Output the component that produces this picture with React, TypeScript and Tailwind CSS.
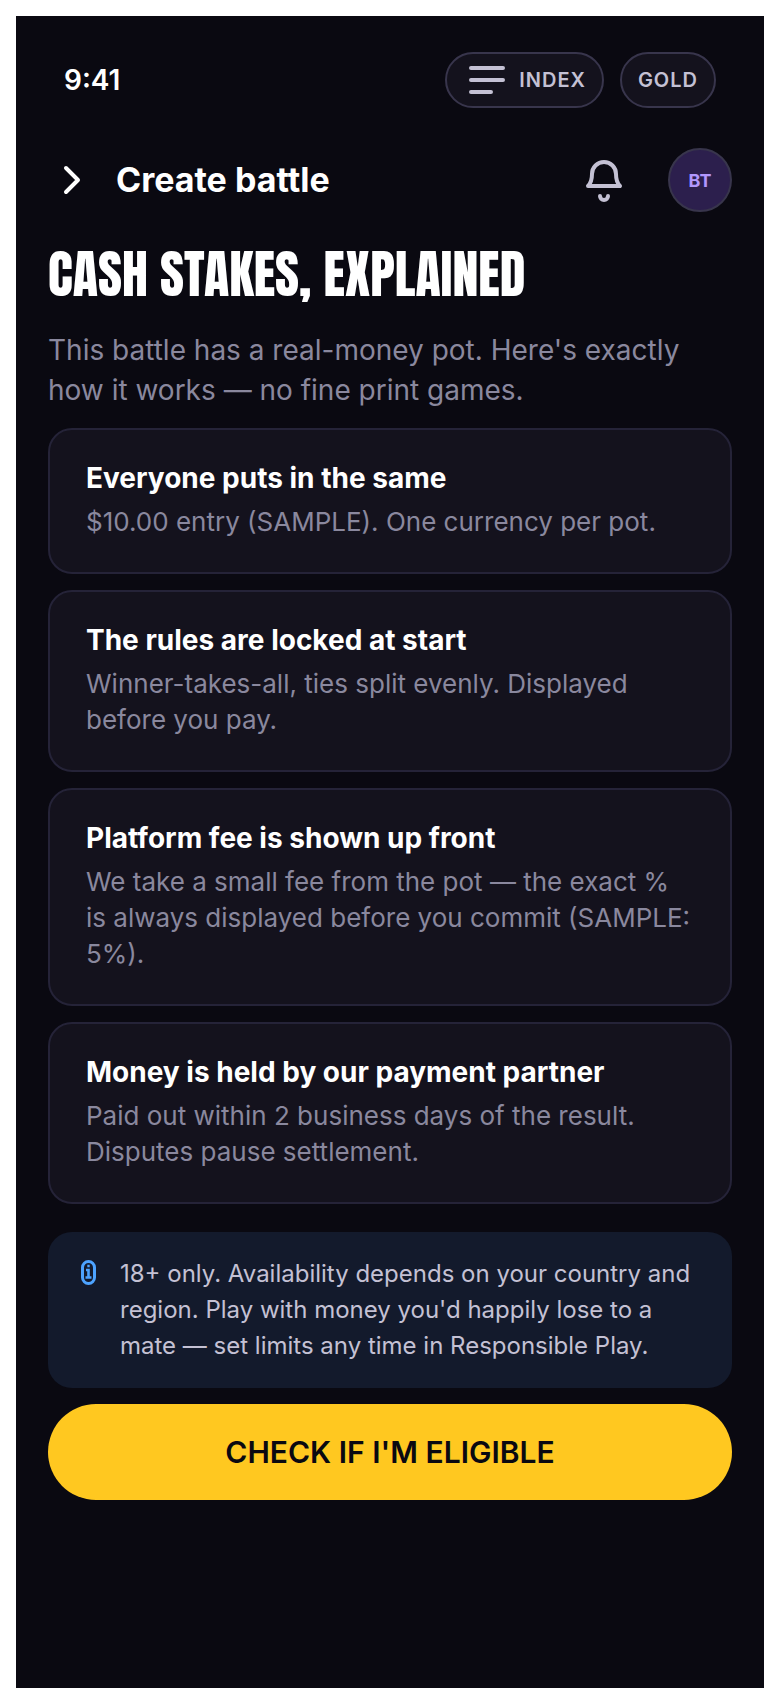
import type { ReactNode } from 'react';

const stakes = [
  {
    title: 'Everyone puts in the same',
    body: '$10.00 entry (SAMPLE). One currency per pot.',
  },
  {
    title: 'The rules are locked at start',
    body: 'Winner-takes-all, ties split evenly. Displayed before you pay.',
  },
  {
    title: 'Platform fee is shown up front',
    body: 'We take a small fee from the pot — the exact % is always displayed before you commit (SAMPLE: 5%).',
  },
  {
    title: 'Money is held by our payment partner',
    body: 'Paid out within 2 business days of the result. Disputes pause settlement.',
  },
];

export default function App() {
  return (
    <div className="flex min-h-screen flex-col bg-white px-4 pt-4 font-['Inter',sans-serif]">
      <div className="flex-1 bg-[#0a0911] px-8 pt-9 pb-12 text-white">
        <StatusBar />
        <Header />
        <main>
          <h1 className="mt-[34px] font-['Anton','Impact','Liberation_Sans_Narrow',sans-serif] text-[52px] leading-[56px] font-normal uppercase">
            Cash stakes, explained
          </h1>
          <p className="mt-7 text-[28px] leading-10 text-[#8a889e]">
            This battle has a real-money pot. Here's exactly how it works — no fine print games.
          </p>
          <div className="mt-[18px] flex flex-col gap-4">
            {stakes.map((item) => (
              <StakeCard key={item.title} title={item.title} body={item.body} />
            ))}
          </div>
          <div className="mt-7 flex gap-6 rounded-3xl bg-[#131a2c] px-8 py-6">
            <InfoIcon />
            <p className="flex-1 text-[24px] leading-9 text-[#c4c1d4]">
              18+ only. Availability depends on your country and region. Play with money you'd
              happily lose to a mate — set limits any time in Responsible Play.
            </p>
          </div>
          <button
            type="button"
            className="mt-4 h-24 w-full rounded-full bg-[#ffc820] text-[30px] font-semibold text-[#0a0911]"
          >
            CHECK IF I'M ELIGIBLE
          </button>
        </main>
      </div>
    </div>
  );
}

function StatusBar() {
  return (
    <div className="flex items-center justify-between px-4">
      <span className="text-[28px] leading-9 font-semibold">9:41</span>
      <div className="flex gap-4">
        <Pill>
          <svg viewBox="0 0 24 24" className="size-12" {...strokeProps}>
            <path d="M4 6h16M4 12h16M4 18h10" />
          </svg>
          INDEX
        </Pill>
        <Pill>GOLD</Pill>
      </div>
    </div>
  );
}

function Pill({ children }: { children: ReactNode }) {
  return (
    <button
      type="button"
      className="flex h-14 items-center gap-2 rounded-full border-2 border-[#38354c] bg-[#14121d] px-4 text-[20px] font-semibold tracking-wider text-[#c4c1d4]"
    >
      {children}
    </button>
  );
}

function Header() {
  return (
    <header className="mt-10 flex h-16 items-center">
      <button type="button" aria-label="Back">
        <svg viewBox="0 0 24 24" className="size-12" {...strokeProps}>
          <path d="m9 6 6 6-6 6" />
        </svg>
      </button>
      <h2 className="ml-5 flex-1 text-[34px] leading-10 font-bold">Create battle</h2>
      <button type="button" aria-label="Notifications" className="mr-10 text-[#c4c1d4]">
        <svg viewBox="0 0 24 24" className="size-12" {...strokeProps}>
          <path d="M6 9a6 6 0 0 1 12 0c0 3.500.8 4.800 2 6H4c1.200-1.200 2-2.500 2-6Z" />
          <path d="M10 20a2 2 0 0 0 4 0" />
        </svg>
      </button>
      <button
        type="button"
        className="size-16 rounded-full border-2 border-[#38354c] bg-[#2c1f4d] text-[18px] font-bold text-[#b197fc]"
      >
        BT
      </button>
    </header>
  );
}

function StakeCard({ title, body }: { title: string; body: string }) {
  return (
    <section className="rounded-3xl border-2 border-[#252338] bg-[#14121d] px-9 py-8">
      <h3 className="text-[28px] leading-8 font-bold">{title}</h3>
      <p className="mt-2.5 text-[26px] leading-9 text-[#8a889e]">{body}</p>
    </section>
  );
}

function InfoIcon() {
  return (
    <svg viewBox="0 0 16 26" className="mt-1 h-[26px] w-4 shrink-0 text-[#4da3ff]" fill="none" stroke="currentColor">
      <rect x="2.500" y="1.500" width="12" height="22" rx="6" strokeWidth="3" />
      <path d="M6 10h2.500v7M5.500 17.500h6M7.300 6h2.400" strokeWidth="2.600" />
    </svg>
  );
}

const strokeProps = {
  fill: 'none',
  stroke: 'currentColor',
  strokeWidth: 2,
  strokeLinecap: 'round',
  strokeLinejoin: 'round',
} as const;
